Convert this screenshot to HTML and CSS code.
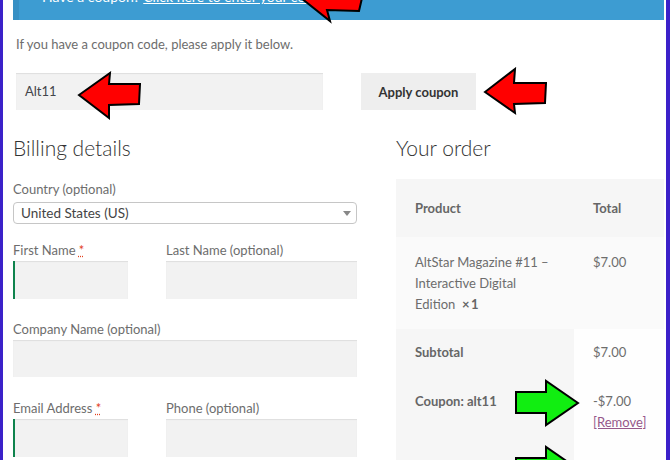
FILE: index.html
```html
<!DOCTYPE html>
<html>
<head>
<meta charset="utf-8">
<link rel="stylesheet" href="styles.css">
</head>
<body>
<div class="frame">
  <div class="page">
    <div class="notice"><div class="notice-text">Have a coupon? <a href="#">Click here to enter your code</a></div></div>
    <form class="coupon-form">
      <p class="coupon-text">If you have a coupon code, please apply it below.</p>
      <div class="coupon-row">
        <div class="coupon-input">Alt11</div>
        <button class="coupon-btn" type="button">Apply coupon</button>
      </div>
    </form>
    <div class="columns">
      <div class="billing">
        <h3 class="heading">Billing details</h3>
        <div class="field country">
          <label class="lbl">Country (optional)</label>
          <div class="select">United States (US)<span class="caret"></span></div>
        </div>
        <div class="field-row names">
          <div class="field">
            <label class="lbl">First Name <abbr class="req">*</abbr></label>
            <div class="input short valid"></div>
          </div>
          <div class="field">
            <label class="lbl">Last Name (optional)</label>
            <div class="input"></div>
          </div>
        </div>
        <div class="field company">
          <label class="lbl">Company Name (optional)</label>
          <div class="input"></div>
        </div>
        <div class="field-row contact">
          <div class="field">
            <label class="lbl">Email Address <abbr class="req">*</abbr></label>
            <div class="input short valid"></div>
          </div>
          <div class="field">
            <label class="lbl">Phone (optional)</label>
            <div class="input"></div>
          </div>
        </div>
      </div>
      <div class="order">
        <h3 class="heading">Your order</h3>
        <table class="order-table">
          <colgroup><col class="col1"><col class="col2"></colgroup>
          <thead>
            <tr><th>Product</th><th>Total</th></tr>
          </thead>
          <tbody>
            <tr><td>AltStar Magazine #11&nbsp;–<br>Interactive Digital<br>Edition&nbsp; <strong>×&#8201;1</strong></td><td>$7.00</td></tr>
          </tbody>
          <tfoot>
            <tr><th>Subtotal</th><td>$7.00</td></tr>
            <tr class="last"><th>Coupon: alt11</th><td>-$7.00<br><a href="#" class="remove">[Remove]</a></td></tr>
          </tfoot>
        </table>
      </div>
    </div>
  </div>

  <svg class="arrow arrow-top" width="70" height="24" viewBox="0 0 70 24">
    <polygon points="2,-2 31,21 28,10 60,11 63,-2" fill="#ff0000" stroke="#000" stroke-width="2"/>
  </svg>
  <svg class="arrow arrow-coupon" width="66" height="50" viewBox="0 0 66 50">
    <polygon points="2,24 33,2 32,13 63,13 62,33 32,34 32,47" fill="#ff0000" stroke="#000" stroke-width="2"/>
  </svg>
  <svg class="arrow arrow-apply" width="66" height="50" viewBox="0 0 66 50">
    <polygon points="2,25 32,2 31,16 63,16 62,36 31,37 32,46" fill="#ff0000" stroke="#000" stroke-width="2"/>
  </svg>
  <svg class="arrow arrow-green1" width="66" height="50" viewBox="0 0 66 50">
    <polygon points="64,24 32,2 32,13 2,13 2,34 32,34 32,46" fill="#11ee11" stroke="#000" stroke-width="2"/>
  </svg>
  <svg class="arrow arrow-green2" width="66" height="50" viewBox="0 0 66 50">
    <polygon points="64,24 32,2 32,13 2,13 2,34 32,34 32,46" fill="#11ee11" stroke="#000" stroke-width="2"/>
  </svg>
</div>
</body>
</html>
```

FILE: styles.css
```css
* { box-sizing: border-box; }
html, body { margin: 0; padding: 0; background: #fff; }
body {
  font-family: "Lato", "Liberation Sans", sans-serif;
  font-size: 13px;
  color: #6d6d6d;
}
.frame {
  position: relative;
  width: 670px;
  height: 460px;
  overflow: hidden;
  border-left: 3px solid #3b21c9;
  border-right: 4px solid #3b21c9;
  background: #fff;
}
.page {
  padding: 0 2px 0 10px;
}
.notice {
  height: 20px;
  background: #3d9cd2;
  border-left: 6px solid #3790c4;
  color: #fff;
  padding-left: 23px;
  overflow: hidden;
}
.notice-text {
  margin-top: -10px;
  font-size: 14px;
  line-height: 14px;
  white-space: nowrap;
}
.notice a { color: #fff; }
.coupon-form { padding-left: 3px; }
.coupon-text {
  margin: 14px 0 0;
  line-height: 20px;
}
.coupon-row {
  display: flex;
  gap: 38px;
  margin-top: 19px;
}
.coupon-input {
  width: 307px;
  height: 37px;
  background: #f2f2f2;
  box-shadow: inset 0 1px 1px rgba(0,0,0,0.08);
  padding-left: 9px;
  line-height: 37px;
  color: #43454b;
}
.coupon-btn {
  width: 115px;
  height: 37px;
  border: 0;
  background: #eeeeee;
  color: #333;
  font-family: inherit;
  font-size: 13px;
  font-weight: 700;
  padding: 0;
}
.columns {
  display: grid;
  grid-template-columns: 344px 268px;
  column-gap: 39px;
  margin-top: 24px;
}
.heading {
  margin: 0;
  font-size: 21px;
  font-weight: 300;
  line-height: 28px;
  color: #333;
}
.lbl {
  display: block;
  line-height: 20px;
}
.req {
  color: #e2401c;
  text-decoration: underline dotted;
  border: 0;
}
.country { margin-top: 17px; }
.names { margin-top: 16px; }
.company { margin-top: 20px; }
.contact { margin-top: 21px; }
.select {
  position: relative;
  margin-top: 3px;
  height: 22px;
  border: 1px solid #c6c6c6;
  border-radius: 4px;
  line-height: 20px;
  padding-left: 7px;
  color: #444;
  font-size: 13.5px;
}
.caret {
  position: absolute;
  right: 5px;
  top: 8px;
  border-left: 4px solid transparent;
  border-right: 4px solid transparent;
  border-top: 5px solid #888;
}
.field-row {
  display: grid;
  grid-template-columns: 153px 191px;
}
.input {
  margin-top: 1px;
  height: 38px;
  background: #f2f2f2;
  box-shadow: inset 0 1px 1px rgba(0,0,0,0.08);
}
.company .input { height: 37px; }
.input.short { width: 115px; }
.input.valid { box-shadow: inset 2px 0 0 #0f834d, inset 0 1px 1px rgba(0,0,0,0.08); }
.order-table {
  margin-top: 17px;
  width: 268px;
  table-layout: fixed;
  border-collapse: collapse;
  border-spacing: 0;
}
.col1 { width: 178px; }
.col2 { width: 90px; }
.order-table th, .order-table td {
  text-align: left;
  vertical-align: top;
  padding: 0 19px;
  line-height: 21px;
  font-size: 13px;
  white-space: nowrap;
}
.order-table thead th {
  background: #f6f6f6;
  font-weight: 700;
  color: #666;
  height: 58px;
  vertical-align: middle;
}
.order-table tbody td {
  background: #fafafa;
  padding-top: 15px;
  padding-bottom: 14px;
}
.order-table tbody strong { color: #666; }
.order-table tfoot th {
  background: #f6f6f6;
  font-weight: 700;
  color: #666;
  padding-top: 13px;
  padding-bottom: 15px;
}
.order-table tfoot td {
  background: #fefefe;
  padding-top: 13px;
  padding-bottom: 15px;
}
.order-table tfoot tr.last th,
.order-table tfoot tr.last td { padding-bottom: 40px; }
.remove { color: #96588a; }
.arrow { position: absolute; }
.arrow-top { left: 296px; top: 0; }
.arrow-coupon { left: 74px; top: 71px; }
.arrow-apply { left: 480px; top: 67px; }
.arrow-green1 { left: 511px; top: 379px; }
.arrow-green2 { left: 511px; top: 445px; }
```
